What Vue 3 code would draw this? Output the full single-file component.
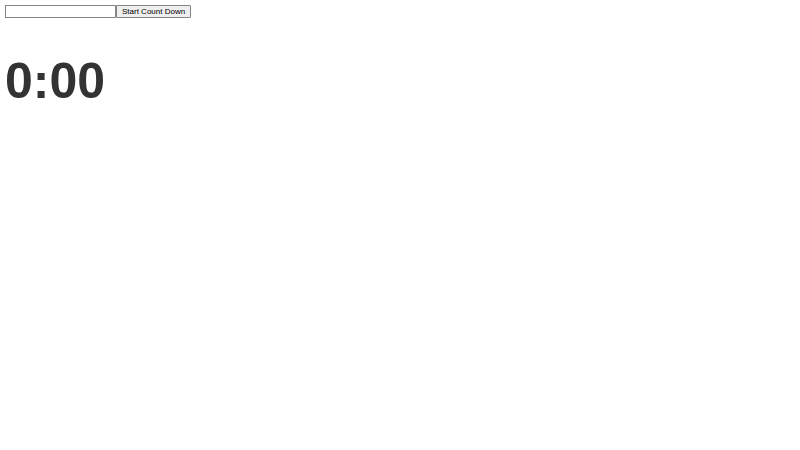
<script setup>
import { ref, computed, onUnmounted } from 'vue'

const minutes = ref('')
const remaining = ref(0)
let timer = null

const display = computed(() => {
  const secs = String(remaining.value % 60).padStart(2, '0')
  return `${Math.floor(remaining.value / 60)}:${secs}`
})

function start() {
  clearInterval(timer)
  remaining.value = Math.max(0, Math.round(Number(minutes.value) * 60) || 0)
  timer = setInterval(() => {
    if (remaining.value > 0) remaining.value--
    else clearInterval(timer)
  }, 1000)
}

onUnmounted(() => clearInterval(timer))
</script>

<template>
  <main class="page">
    <form class="controls" @submit.prevent="start">
      <input v-model="minutes" class="field" type="text" aria-label="Minutes" />
      <button class="start" type="submit">Start Count Down</button>
    </form>
    <h1 class="time">{{ display }}</h1>
  </main>
</template>

<style>
body {
  margin: 0;
  background: #fff;
}
</style>

<style scoped>
.page {
  padding: 5px;
  font-family: "Liberation Sans", Arial, sans-serif;
}

.controls {
  display: flex;
  align-items: stretch;
}

.field,
.start {
  box-sizing: border-box;
  height: 13px;
  margin: 0;
  border: 1px solid #858585;
  font-family: inherit;
  font-size: 8px;
  line-height: 11px;
}

.field {
  width: 111px;
  padding: 0 1px;
  background: #fff;
}

.start {
  padding: 0 5px;
  border-radius: 1px;
  background: #efefef;
  color: #000;
  white-space: nowrap;
}

.time {
  margin: 34px 0 0;
  color: #333;
  font-size: 50px;
  line-height: 58px;
  font-weight: 700;
}
</style>
